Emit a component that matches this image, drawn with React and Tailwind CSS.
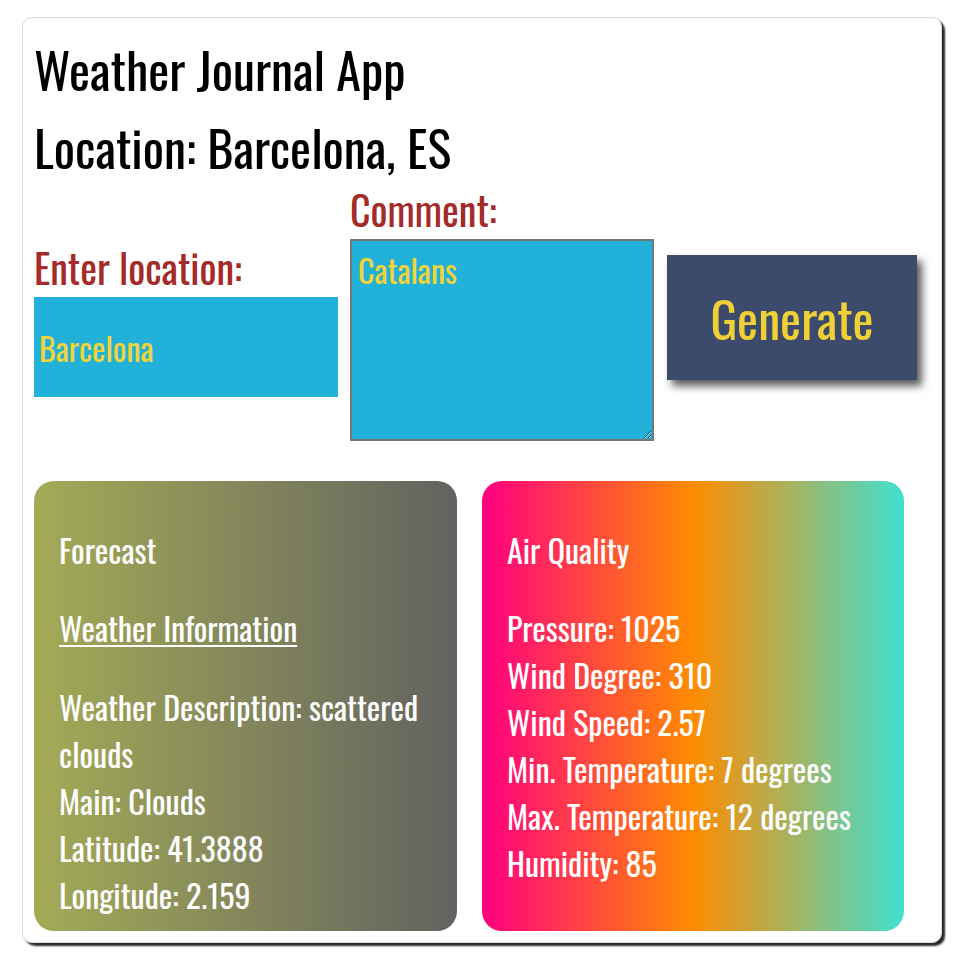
const font = { fontFamily: '"Oswald", "Roboto Condensed", "Liberation Sans Narrow", sans-serif' };

export default function App() {
  return (
    <div style={font} className="bg-white min-h-[963px] pt-[17px] pl-[22px]">
      <div className="w-[920px] h-[926px] rounded-[10px] border border-[#dcdcdc] bg-white shadow-[3px_3px_2px_#2a2a2a] pt-[13px] px-[11px]">
        <div className="text-[50px] leading-[74px] text-black">Weather Journal App</div>
        <div className="text-[50px] leading-[74px] text-black mt-[4px]">Location: Barcelona, ES</div>

        <div className="flex items-start mt-[-3px]">
          <div className="mt-[58px] w-[304px]">
            <label className="block text-[40px] leading-[59px] text-[#a52a2a]">Enter location:</label>
            <input
              defaultValue="Barcelona"
              style={font}
              className="block w-[304px] h-[100px] bg-[#22b1d9] text-[#f0d43a] text-[32px] px-[5px] outline-none"
            />
          </div>

          <div className="ml-[12px] w-[304px]">
            <label className="block text-[40px] leading-[59px] text-[#a52a2a]">Comment:</label>
            <textarea
              defaultValue="Catalans"
              style={font}
              className="block w-[304px] h-[202px] bg-[#22b1d9] border-2 border-[#767676] text-[#f0d43a] text-[32px] leading-[47px] px-[6px] pt-[5px] outline-none"
            />
          </div>

          <button
            style={font}
            className="ml-[13px] mt-[75px] w-[250px] h-[125px] bg-[#3c4a6b] text-[#f0d135] text-[50px] shadow-[5px_6px_8px_rgba(0,0,0,0.65)]"
          >
            Generate
          </button>
        </div>

        <div className="flex gap-[25px] mt-[40px]">
          <div className="w-[423px] h-[450px] rounded-[20px] bg-[linear-gradient(to_right,#a4ab56,#626260)] text-white text-[32px] leading-[47px] pt-[45px] pb-[13px] pl-[25px]">
            <div>Forecast</div>
            <div className="mt-[31px] underline underline-offset-[3px] decoration-2">Weather Information</div>
            <div className="mt-[32px]">Weather Description: scattered clouds</div>
            <div>Main: Clouds</div>
            <div>Latitude: 41.3888</div>
            <div>Longitude: 2.159</div>
          </div>

          <div className="w-[422px] h-[450px] rounded-[20px] bg-[linear-gradient(to_right,#ff0080,#ff8c00,#40e0d0)] text-white text-[32px] leading-[47px] pt-[45px] pl-[25px]">
            <div>Air Quality</div>
            <div className="mt-[31px]">Pressure: 1025</div>
            <div>Wind Degree: 310</div>
            <div>Wind Speed: 2.57</div>
            <div>Min. Temperature: 7 degrees</div>
            <div>Max. Temperature: 12 degrees</div>
            <div>Humidity: 85</div>
          </div>
        </div>
      </div>
    </div>
  );
}
